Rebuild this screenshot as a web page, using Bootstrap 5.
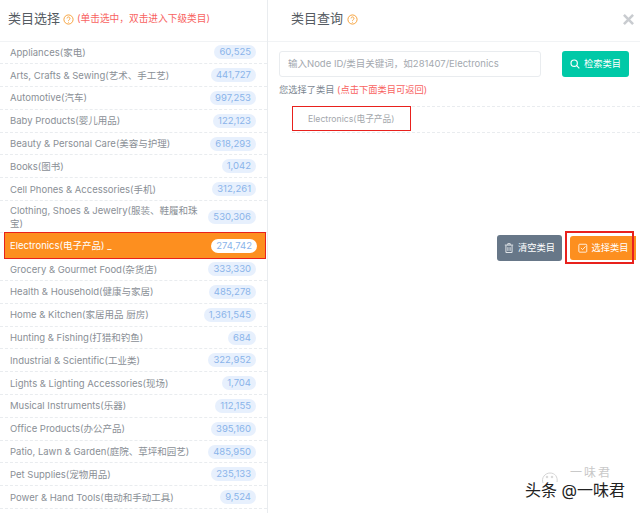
<!DOCTYPE html>
<html lang="zh-CN">
<head>
  <meta charset="UTF-8" />
  <meta name="viewport" content="width=device-width, initial-scale=1.0"/>
  <title>类目选择</title>
  <link href="https://cdn.jsdelivr.net/npm/bootstrap@5.3.3/dist/css/bootstrap.min.css" rel="stylesheet" />
  <style>
    html, body { height: 513px; overflow: hidden; }
    body { font-family: Inter, "Noto Sans CJK SC", sans-serif; font-size: 9.5px; color: #8a8f96; background: #fff; position: relative; }
    .shell { height: 513px; }
    .pane-left { width: 268px; flex: none; border-right: 1px solid #e9ecef; overflow: hidden; }
    .pane-right { flex: 1; min-width: 0; position: relative; }
    .pane-head { height: 41.5px; border-bottom: 1px solid #f1f3f5; padding-bottom: 2px; }
    .pane-title { font-size: 13px; color: #555b62; font-weight: 400; margin: 0; }
    .hint { font-size: 9.7px; color: #f8635f; }
    .help-ico { width: 11px; height: 11px; flex: none; }
    .help-left { margin: 0 3px; }
    .cat-row { height: 22.8px; padding: 0 11px 0 10px; border-bottom: 1px dashed #e9ecef; line-height: 13px; }
    .cat-row.two-line { height: 31.9px; }
    .cat-name { max-width: 195px; }
    .cat-count { background: #e7f0fd; color: #8ab4ea; font-weight: 400; border-radius: 7px; padding: 0 5px; line-height: 14px; font-size: 9.5px; flex: none; }
    .cat-row.picked { height: 25.3px; background: #fd8f1f; color: #fff; outline: 1.5px solid #e8211d; margin: 0 2px 0 5px; padding-left: 5px; padding-right: 8px; border-bottom: 0; }
    .cat-row.picked .cat-count { background: #fff; }
    .search-input { width: 262px; height: 26px; font-size: 9.5px; padding: 0 8px; border-color: #e9ecef; border-radius: 3px; color: #8a8f96; }
    .search-input::placeholder { color: #a4a9af; }
    .btn-find { background: #00c9a7; color: #fff; font-size: 9.25px; width: 67px; height: 26px; padding: 0; border: 0; border-radius: 3px; }
    .picked-line { font-size: 9.25px; color: #7c8792; padding: 6px 11px 0; line-height: 13px; }
    .picked-line .hint { font-size: 9.25px; }
    .picked-table { margin: 10px 0 0 24px; height: 27px; border-top: 1px dashed #e9ecef; border-bottom: 1px dashed #e9ecef; }
    .picked-cell { width: 119px; height: 25px; margin-top: -1px; border: 1.5px solid #e8211d; color: #a3a7ac; font-size: 8.7px; padding: 3px 0 0 15px; background: #fff; }
    .action-row { padding: 102.5px 0 0 0; gap: 8px; margin-right: 4px; }
    .btn-clear { background: #677788; color: #fff; font-size: 9.25px; width: 65px; height: 26px; padding: 0; border: 0; border-radius: 3px; }
    .btn-choose { background: #fd8f1f; color: #fff; font-size: 9.25px; width: 66px; height: 24px; padding: 0; border: 0; border-radius: 3px 0 0 3px; }
    .choose-wrap { position: relative; }
    .choose-wrap::after { content: ""; position: absolute; left: -5px; right: 2px; top: -5px; bottom: -4px; border: 2px solid #e8211d; pointer-events: none; }
    .btn-find svg, .btn-clear svg, .btn-choose svg { width: 10px; height: 10px; flex: none; }
    .close-x { position: absolute; top: 14px; right: 6px; width: 11px; height: 11px; }
    .watermark { position: absolute; left: 525px; top: 482px; font-size: 16px; line-height: 16px; color: #222; text-shadow: 0 0 1px #fff, 1px 1px 0 #fff; white-space: nowrap; }
    .watermark-top { position: absolute; left: 570px; top: 466px; font-size: 12px; line-height: 13px; color: #c9c9c9; letter-spacing: 2px; white-space: nowrap; }
    .watermark-logo { position: absolute; left: 540px; top: 472px; width: 20px; height: 16px; }
  </style>
</head>
<body>
<div class="shell d-flex">
  <div class="pane-left">
    <div class="pane-head d-flex align-items-center ps-2">
      <h5 class="pane-title">类目选择</h5>
      <svg class="help-ico help-left" viewBox="0 0 12 12" fill="none" stroke="#f59b2e"><circle cx="6" cy="6" r="5"/><path d="M4.4 4.8a1.6 1.6 0 1 1 2.4 1.4c-.5.3-.8.6-.8 1.2M6 8.6v.8"/></svg>
      <span class="hint">(单击选中，双击进入下级类目)</span>
    </div>
    <div id="cats"></div>
  </div>
  <div class="pane-right">
    <div class="pane-head d-flex align-items-center gap-1" style="padding-left:23px">
      <h5 class="pane-title">类目查询</h5>
      <svg class="help-ico" viewBox="0 0 12 12" fill="none" stroke="#f59b2e"><circle cx="6" cy="6" r="5"/><path d="M4.4 4.8a1.6 1.6 0 1 1 2.4 1.4c-.5.3-.8.6-.8 1.2M6 8.6v.8"/></svg>
    </div>
    <svg class="close-x" viewBox="0 0 12 12" stroke="#c9ccd0" stroke-width="2.8"><path d="M1 1l10 10M11 1L1 11"/></svg>
    <div class="d-flex justify-content-between" style="padding:9px 11px 0 11px">
      <input class="form-control search-input" type="text" placeholder="输入Node ID/类目关键词，如281407/Electronics" />
      <button class="btn btn-find d-flex align-items-center justify-content-center gap-1">
        <svg viewBox="0 0 12 12" fill="none" stroke="#fff" stroke-width="1.4"><circle cx="5" cy="5" r="3.8"/><path d="M8 8l3.200 3.200"/></svg>检索类目
      </button>
    </div>
    <div class="picked-line">您选择了类目 <span class="hint">(点击下面类目可返回)</span></div>
    <div class="picked-table">
      <div class="picked-cell d-flex align-items-center">Electronics(电子产品)</div>
    </div>
    <div class="action-row d-flex justify-content-end align-items-center">
      <button class="btn btn-clear d-flex align-items-center justify-content-center gap-1">
        <svg viewBox="0 0 12 12" fill="none" stroke="#dfe3e7" stroke-width="1.2"><path d="M1 2.500h10M4.500 2.300V.8h3v1.500M2.300 2.800V11.400h7.400V2.800M4.700 5v4.500M7.300 5v4.500"/></svg>清空类目
      </button>
      <div class="choose-wrap">
        <button class="btn btn-choose d-flex align-items-center justify-content-center gap-1">
          <svg viewBox="0 0 12 12" fill="none" stroke="#fff"><rect x="1" y="1.500" width="9.500" height="9.500" rx="1"/><path d="M3.500 6l2 2 3.500-4"/></svg>选择类目
        </button>
      </div>
    </div>
  </div>
</div>
<svg class="watermark-logo" viewBox="0 0 20 16" fill="none" stroke="#d5d5d5"><path d="M3 11C1 6 5 1 10 1s8 4 7 9"/><circle cx="7" cy="5" r=".8" fill="#d5d5d5"/><circle cx="12" cy="5" r=".8" fill="#d5d5d5"/></svg>
<div class="watermark-top">一味君</div>
<div class="watermark">头条 @一味君</div>

<script>
  const cats = [
    ['Appliances(家电)', '60,525'],
    ['Arts, Crafts & Sewing(艺术、手工艺)', '441,727'],
    ['Automotive(汽车)', '997,253'],
    ['Baby Products(婴儿用品)', '122,123'],
    ['Beauty & Personal Care(美容与护理)', '618,293'],
    ['Books(图书)', '1,042'],
    ['Cell Phones & Accessories(手机)', '312,261'],
    ['Clothing, Shoes & Jewelry(服装、鞋履和珠宝)', '530,306', 'two-line'],
    ['Electronics(电子产品) _', '274,742', 'picked'],
    ['Grocery & Gourmet Food(杂货店)', '333,330'],
    ['Health & Household(健康与家居)', '485,278'],
    ['Home & Kitchen(家居用品 厨房)', '1,361,545'],
    ['Hunting & Fishing(打猎和钓鱼)', '684'],
    ['Industrial & Scientific(工业类)', '322,952'],
    ['Lights & Lighting Accessories(现场)', '1,704'],
    ['Musical Instruments(乐器)', '112,155'],
    ['Office Products(办公产品)', '395,160'],
    ['Patio, Lawn & Garden(庭院、草坪和园艺)', '485,950'],
    ['Pet Supplies(宠物用品)', '235,133'],
    ['Power & Hand Tools(电动和手动工具)', '9,524']
  ];
  document.getElementById('cats').innerHTML = cats.map(c =>
    `<div class="cat-row d-flex align-items-center justify-content-between ${c[2] || ''}">
      <span class="cat-name">${c[0].replace(/&/g, '&amp;')}</span><span class="cat-count">${c[1]}</span>
    </div>`).join('');
</script>
<script src="https://cdn.jsdelivr.net/npm/bootstrap@5.3.3/dist/js/bootstrap.bundle.min.js"></script>
</body>
</html>
